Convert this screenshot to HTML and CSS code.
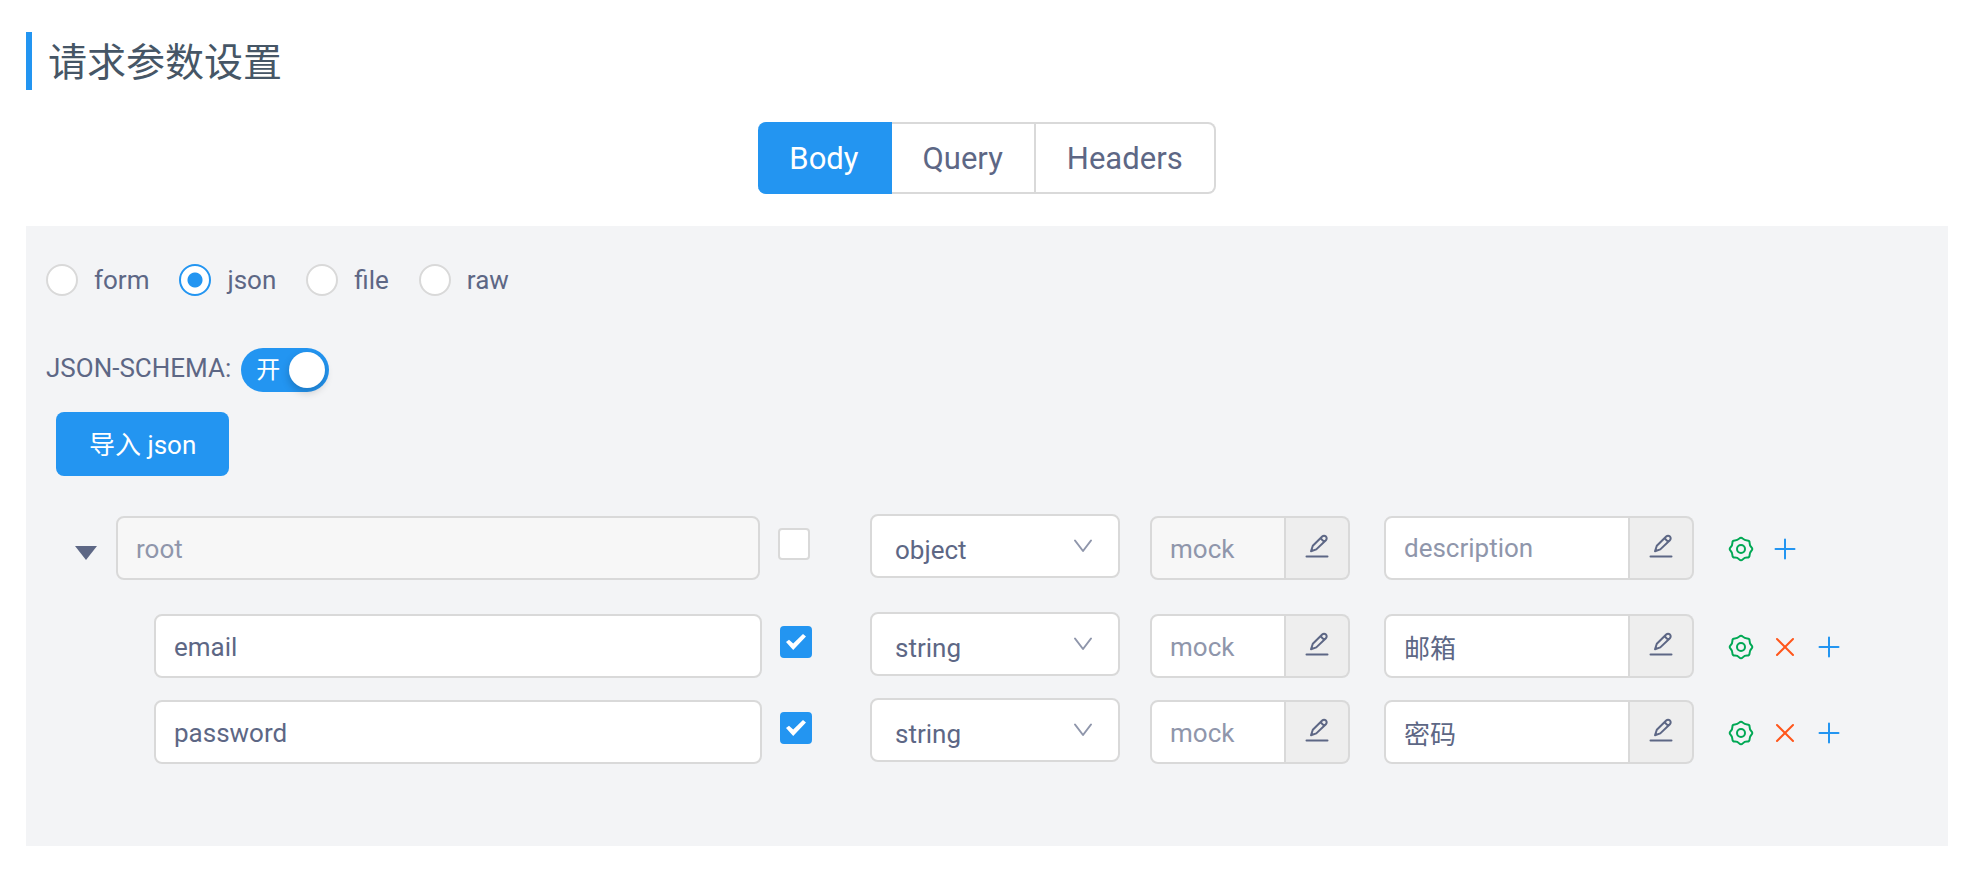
FILE: index.html
```html
<!DOCTYPE html>
<html lang="zh-CN">
<head>
<meta charset="utf-8">
<meta name="viewport" content="width=device-width, initial-scale=1">
<title>请求参数设置</title>
<link rel="stylesheet" href="styles.css">
</head>
<body>
<svg class="sprite" aria-hidden="true">
  <symbol id="i-edit" viewBox="0 0 24 24">
    <path d="M1.500 22.500h21M6 17.200l1.800-5.400 9.400-9.300a2.600 2.600 0 0 1 3.700 0a2.600 2.600 0 0 1 0 3.700l-9.600 9.200zM15.600 4.200l3.600 3.700"/>
  </symbol>
  <symbol id="i-gear" viewBox="-13 -13 26 26">
    <path d="M-1.78-10.4Q0-12.2 1.78-10.4T6.1-8.61 8.61-6.1 10.4-1.78 10.4 1.78 8.61 6.1 6.1 8.61 1.78 10.4-1.78 10.4-6.1 8.61-8.61 6.1-10.4 1.78-10.4-1.78-8.61-6.1-6.1-8.61-1.78-10.4z"/>
    <circle r="4"/>
  </symbol>
  <symbol id="i-plus" viewBox="-13 -13 26 26"><path d="M-9.500 0h19M0-9.500v19"/></symbol>
  <symbol id="i-close" viewBox="-13 -13 26 26"><path d="M-8-8 8 8M8-8-8 8"/></symbol>
  <symbol id="i-down" viewBox="0 0 20 14"><path d="M2 1.500 10 12l8-10.500"/></symbol>
</svg>

<main class="page">
  <h2 class="title">请求参数设置</h2>

  <nav class="tabs">
    <button type="button" class="tab tab-active">Body</button>
    <button type="button" class="tab">Query</button>
    <button type="button" class="tab">Headers</button>
  </nav>

  <section class="panel">
    <div class="radios">
      <label class="radio"><input type="radio" name="kind">form</label>
      <label class="radio"><input type="radio" name="kind" checked>json</label>
      <label class="radio"><input type="radio" name="kind">file</label>
      <label class="radio"><input type="radio" name="kind">raw</label>
    </div>

    <div class="schema">
      <span class="schema-label">JSON-SCHEMA:</span>
      <button type="button" class="switch" role="switch" aria-checked="true">开<span class="knob"></span></button>
    </div>

    <button type="button" class="import">导入 json</button>

    <div class="tree">
      <div class="row row-root">
        <div class="name">
          <button type="button" class="caret" aria-label="折叠"></button>
          <input class="field" type="text" value="root" aria-label="字段名" disabled>
          <input class="check" type="checkbox" aria-label="全选">
        </div>
        <div class="select">
          <select aria-label="类型"><option>object</option></select>
          <svg class="arrow"><use href="#i-down"/></svg>
        </div>
        <div class="group">
          <input class="field" type="text" placeholder="mock" aria-label="mock" disabled>
          <button type="button" class="addon" aria-label="编辑"><svg><use href="#i-edit"/></svg></button>
        </div>
        <div class="group group-desc">
          <input class="field" type="text" placeholder="description" aria-label="description">
          <button type="button" class="addon" aria-label="编辑"><svg><use href="#i-edit"/></svg></button>
        </div>
        <div class="actions">
          <button type="button" class="act gear" aria-label="高级设置"><svg><use href="#i-gear"/></svg></button>
          <button type="button" class="act plus" aria-label="添加"><svg><use href="#i-plus"/></svg></button>
        </div>
      </div>

      <div class="children">
        <div class="row">
          <div class="name name-child">
            <input class="field" type="text" value="email" aria-label="字段名">
            <input class="check" type="checkbox" aria-label="必需" checked>
          </div>
          <div class="select">
            <select aria-label="类型"><option>string</option></select>
            <svg class="arrow"><use href="#i-down"/></svg>
          </div>
          <div class="group">
            <input class="field" type="text" placeholder="mock" aria-label="mock">
            <button type="button" class="addon" aria-label="编辑"><svg><use href="#i-edit"/></svg></button>
          </div>
          <div class="group group-desc">
            <input class="field" type="text" value="邮箱" aria-label="description">
            <button type="button" class="addon" aria-label="编辑"><svg><use href="#i-edit"/></svg></button>
          </div>
          <div class="actions">
            <button type="button" class="act gear" aria-label="高级设置"><svg><use href="#i-gear"/></svg></button>
            <button type="button" class="act close" aria-label="删除"><svg><use href="#i-close"/></svg></button>
            <button type="button" class="act plus" aria-label="添加"><svg><use href="#i-plus"/></svg></button>
          </div>
        </div>

        <div class="row">
          <div class="name name-child">
            <input class="field" type="text" value="password" aria-label="字段名">
            <input class="check" type="checkbox" aria-label="必需" checked>
          </div>
          <div class="select">
            <select aria-label="类型"><option>string</option></select>
            <svg class="arrow"><use href="#i-down"/></svg>
          </div>
          <div class="group">
            <input class="field" type="text" placeholder="mock" aria-label="mock">
            <button type="button" class="addon" aria-label="编辑"><svg><use href="#i-edit"/></svg></button>
          </div>
          <div class="group group-desc">
            <input class="field" type="text" value="密码" aria-label="description">
            <button type="button" class="addon" aria-label="编辑"><svg><use href="#i-edit"/></svg></button>
          </div>
          <div class="actions">
            <button type="button" class="act gear" aria-label="高级设置"><svg><use href="#i-gear"/></svg></button>
            <button type="button" class="act close" aria-label="删除"><svg><use href="#i-close"/></svg></button>
            <button type="button" class="act plus" aria-label="添加"><svg><use href="#i-plus"/></svg></button>
          </div>
        </div>
      </div>
    </div>
  </section>
</main>
</body>
</html>
```
FILE: styles.css
```css
:root {
  --blue: #2395f1;
  --text: #5d6785;
  --muted: #8f96ab;
  --line: #d9d9d9;
}

* { box-sizing: border-box; }

body {
  margin: 0;
  background: #fff;
  color: var(--text);
  font: 26px/32px Roboto, "Noto Sans CJK SC", sans-serif;
}

button, input, select {
  margin: 0;
  font: inherit;
  color: inherit;
}

button {
  padding: 0;
  border: 0;
  background: none;
  cursor: pointer;
}

svg {
  display: block;
  fill: none;
  stroke: currentColor;
  stroke-width: 2;
  stroke-linecap: round;
  stroke-linejoin: round;
}

.sprite { display: none; }

.page { padding: 32px 22px 28px 26px; }

.title {
  margin: 0;
  padding: 4px 0 0 16px;
  border-left: 6px solid var(--blue);
  color: #465666;
  font-size: 39px;
  font-weight: 400;
  line-height: 54px;
}

/* Tabs */
.tabs {
  display: flex;
  justify-content: center;
  margin: 32px 0;
}

.tab {
  height: 72px;
  padding: 2px 31px 0;
  border: 2px solid var(--line);
  border-left: 0;
  background: #fff;
  font-size: 31px;
}

.tab-active {
  border-color: var(--blue);
  border-radius: 8px 0 0 8px;
  background: var(--blue);
  color: #fff;
}

.tab:last-child { border-radius: 0 8px 8px 0; }

/* Panel */
.panel {
  padding: 38px 30px 82px 20px;
  background: #f3f4f6;
}

.radios {
  display: flex;
  gap: 30px;
}

.radio {
  display: flex;
  align-items: center;
  gap: 16px;
}

.radio input {
  appearance: none;
  width: 32px;
  height: 32px;
  border: 2px solid var(--line);
  border-radius: 50%;
  background: #fff;
}

.radio input:checked {
  border-color: var(--blue);
  background: radial-gradient(circle, var(--blue) 7px, #fff 8px);
}

.schema {
  display: flex;
  align-items: center;
  gap: 10px;
  margin-top: 52px;
}

.schema-label { padding-bottom: 4px; }

.switch {
  display: flex;
  align-items: center;
  justify-content: space-between;
  width: 88px;
  height: 44px;
  padding: 0 4px 0 15px;
  border-radius: 22px;
  background: var(--blue);
  color: #fff;
  font-size: 24px;
}

.knob {
  width: 36px;
  height: 36px;
  border-radius: 50%;
  background: #fff;
  box-shadow: 0 4px 8px rgba(0, 0, 0, 0.2);
}

.import {
  display: block;
  height: 64px;
  margin: 20px 0 38px 10px;
  padding: 2px 33px 0;
  border-radius: 8px;
  background: var(--blue);
  color: #fff;
}

/* Schema tree */
.tree {
  display: flex;
  flex-direction: column;
  gap: 32px;
  margin-left: 20px;
}

.children {
  display: flex;
  flex-direction: column;
  gap: 20px;
}

.row {
  display: grid;
  grid-template-columns: 774fr 250fr 200fr 314fr 194fr;
  gap: 30px;
  align-items: start;
}

.name {
  display: flex;
  gap: 18px;
  padding: 2px 30px 0 0;
}

.name-child {
  padding-left: 88px;
  padding-right: 28px;
}

.caret {
  width: 32px;
  height: 64px;
}

.caret::before {
  content: "";
  display: block;
  width: 22px;
  height: 14px;
  margin: 10px 0 0 9px;
  background: var(--text);
  clip-path: polygon(0 0, 100% 0, 50% 100%);
}

.field {
  flex: 1;
  min-width: 0;
  width: 100%;
  height: 64px;
  padding: 2px 18px 0;
  border: 2px solid var(--line);
  border-radius: 8px;
  background: #fff;
}

.field:disabled {
  background: #f7f7f7;
  color: var(--muted);
}

.field::placeholder {
  color: var(--muted);
  opacity: 1;
}

.check {
  appearance: none;
  flex: none;
  width: 32px;
  height: 32px;
  margin-top: 12px;
  border: 2px solid var(--line);
  border-radius: 4px;
  background: #fff;
}

.check:checked {
  display: grid;
  place-items: center;
  border-color: var(--blue);
  background: var(--blue);
}

.check:checked::before {
  content: "";
  width: 20px;
  height: 16px;
  background: #fff;
  clip-path: polygon(0 50%, 15% 36%, 36% 60%, 85% 0, 100% 15%, 36% 100%);
}

.select {
  display: grid;
  align-items: center;
}

.select > * { grid-area: 1 / 1; }

.select select {
  appearance: none;
  width: 100%;
  height: 64px;
  padding: 8px 48px 0 23px;
  border: 2px solid var(--line);
  border-radius: 8px;
  background: #fff;
}

.arrow {
  justify-self: end;
  width: 20px;
  height: 14px;
  margin-right: 27px;
  color: var(--muted);
  pointer-events: none;
}

.group {
  display: flex;
  padding-top: 2px;
}

.group .field { border-radius: 8px 0 0 8px; }

.group-desc { padding-left: 4px; }

.group-desc .field { padding-top: 0; }

.addon {
  display: grid;
  place-items: center;
  flex: none;
  width: 64px;
  height: 64px;
  padding-bottom: 4px;
  border: 2px solid var(--line);
  border-left: 0;
  border-radius: 0 8px 8px 0;
  background: #eee;
}

.addon svg {
  width: 24px;
  height: 24px;
}

.actions {
  display: flex;
  align-items: center;
  gap: 18px;
  height: 66px;
  padding: 4px 0 0 4px;
}

.act svg {
  width: 26px;
  height: 26px;
}

.gear { color: #00a854; }
.close { color: #ff561b; }
.plus { color: var(--blue); }
```
